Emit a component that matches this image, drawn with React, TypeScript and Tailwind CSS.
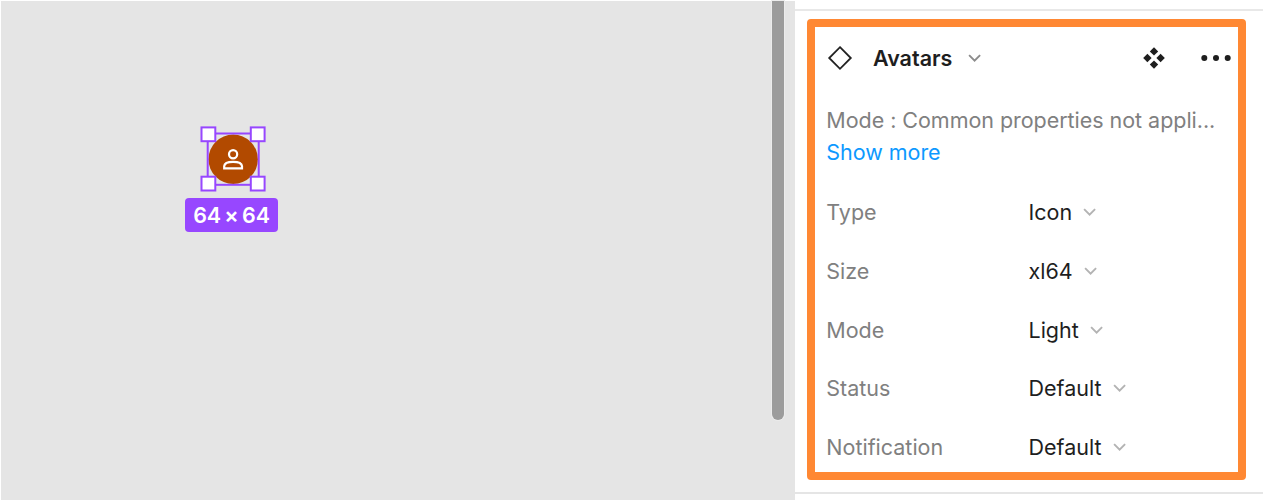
const properties = [
  { label: "Type", value: "Icon" },
  { label: "Size", value: "xl64" },
  { label: "Mode", value: "Light" },
  { label: "Status", value: "Default" },
  { label: "Notification", value: "Default" },
];

function Chevron({ className }: { className: string }) {
  return (
    <svg width="14" height="10" viewBox="0 0 14 10" fill="none" className={className}>
      <path d="M1.1 2.1L6.6 7.6L12.1 2.1" stroke="currentColor" strokeWidth="1.9" />
    </svg>
  );
}

function SelectedAvatar() {
  return (
    <svg width="66" height="66" viewBox="200 126 66 66" fill="none" className="absolute left-[199px] top-[125px]">
      <circle cx="233.2" cy="159.2" r="24.7" fill="#b24a00" />
      <circle cx="233.1" cy="154.3" r="4.1" stroke="#fff" strokeWidth="2.2" />
      <path
        d="M224.2 168.3V166.2C224.4 163.3 228.5 161.8 233.1 161.8S241.8 163.3 242 166.2V168.3Z"
        stroke="#fff"
        strokeWidth="2.2"
      />
      <rect x="207.7" y="133.5" width="51" height="51.3" stroke="#9747ff" strokeWidth="2" />
      <g fill="#fff" stroke="#9747ff" strokeWidth="2">
        <rect x="201.5" y="127.4" width="13.8" height="13.8" />
        <rect x="250.8" y="127.4" width="13.8" height="13.8" />
        <rect x="201.5" y="176.7" width="13.8" height="13.8" />
        <rect x="250.8" y="176.7" width="13.8" height="13.8" />
      </g>
    </svg>
  );
}

function Canvas() {
  return (
    <main className="relative w-[794px] bg-[#e5e5e5]">
      <SelectedAvatar />
      <div className="absolute left-[184px] top-[197px] flex h-[33.5px] w-[93px] items-center justify-center rounded-[4px] bg-[#9747ff] text-[21.5px] font-semibold tracking-[-0.1px] [word-spacing:-2px] whitespace-pre text-white">
        64 × 64
      </div>
      <div className="absolute left-[770.5px] top-0 h-[419px] w-3 rounded-b-full bg-[#9c9c9c] ring-1 ring-[#ececec]" />
    </main>
  );
}

function Header() {
  return (
    <div className="flex h-[62px] shrink-0 items-center pl-3">
      <svg width="26" height="26" viewBox="0 0 26 26" fill="none">
        <path d="M13 2.2L23.8 13L13 23.8L2.2 13Z" stroke="#222" strokeWidth="1.8" />
      </svg>
      <span className="ml-5 w-[79px] text-[21.5px] font-semibold whitespace-nowrap text-[#1e1e1e]">Avatars</span>
      <Chevron className="ml-[16px] text-[#8c8c8c]" />
      <svg width="22" height="22" viewBox="0 0 22 22" fill="#1e1e1e" className="ml-[161px]">
        <path d="M11 0.2L15.2 4.4L11 8.6L6.8 4.4Z" />
        <path d="M11 13.4L15.2 17.6L11 21.8L6.8 17.6Z" />
        <path d="M4.4 6.8L8.6 11L4.4 15.2L0.2 11Z" />
        <path d="M17.6 6.8L21.8 11L17.6 15.2L13.4 11Z" />
      </svg>
      <svg width="30" height="8" viewBox="0 0 30 8" fill="#1e1e1e" className="ml-[36px]">
        <circle cx="3.3" cy="4" r="3" />
        <circle cx="15" cy="4" r="3" />
        <circle cx="26.7" cy="4" r="3" />
      </svg>
    </div>
  );
}

export default function App() {
  return (
    <div className="flex h-[500px] w-[1264px] overflow-hidden bg-white pt-px pr-px pl-px font-[Inter,sans-serif]">
      <Canvas />
      <aside className="flex flex-1 flex-col">
        <div className="mt-2 h-[2px] shrink-0 bg-[#e8e8e8]" />
        <section className="ml-3 mt-[7.7px] flex h-[461.6px] w-[438.5px] shrink-0 flex-col rounded-[4px] border-8 border-[#ff8833]">
          <Header />
          <div className="ml-[11.3px] mt-[15.8px] text-[21.5px] leading-8 tracking-[-0.04px] whitespace-nowrap">
            <p className="text-[#808080]">Mode : Common properties not appli...</p>
            <p className="text-[#0d99ff]">Show more</p>
          </div>
          <dl className="ml-[11.3px] mt-[29.6px] flex flex-col gap-[30.75px] text-[21.5px] leading-7">
            {properties.map((property) => (
              <div key={property.label} className="flex h-7 items-center">
                <dt className="w-[202.2px] text-[#808080]">{property.label}</dt>
                <dd className="flex items-center text-[#1e1e1e]">
                  {property.value}
                  <Chevron className="ml-[11px] text-[#b3b3b3]" />
                </dd>
              </div>
            ))}
          </dl>
        </section>
        <div className="mt-[11.7px] h-[2px] shrink-0 bg-[#e5e5e5]" />
      </aside>
    </div>
  );
}
